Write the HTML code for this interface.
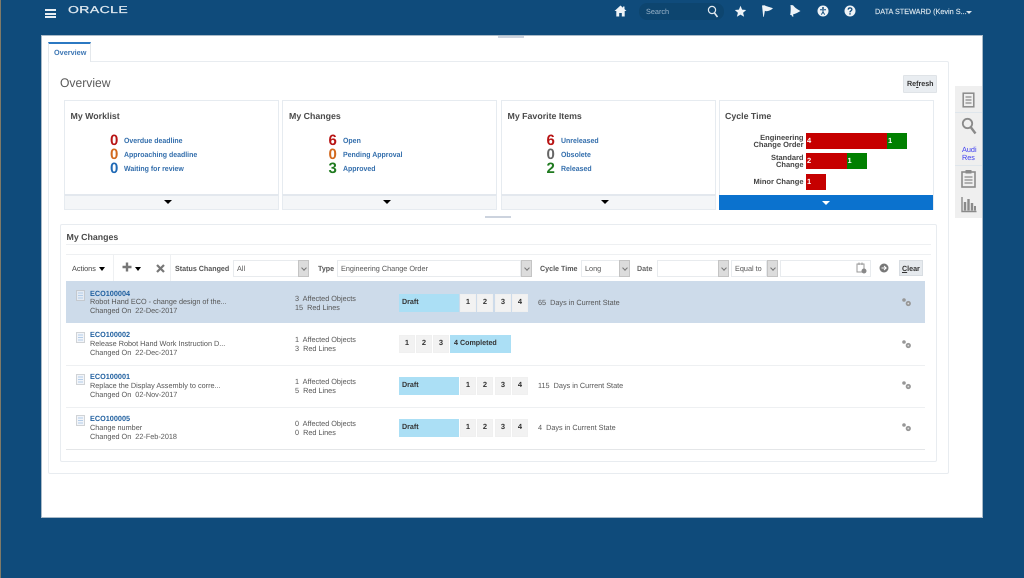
<!DOCTYPE html>
<html><head><meta charset="utf-8"><title>Overview</title>
<style>
html,body{margin:0;padding:0}
body{width:1024px;height:578px;overflow:hidden;position:relative;background:#0f4b7b;font-family:"Liberation Sans",sans-serif;color:#444;text-rendering:geometricPrecision}
div,span,svg{position:absolute}
.t{white-space:nowrap;font-size:7.5px;line-height:10px;transform:scaleX(.97);transform-origin:left}
.t.b{transform:scaleX(.95)}
.b{font-weight:bold}
.lnk{color:#336eac;font-weight:bold;font-size:7.5px;line-height:10px;white-space:nowrap;transform:scaleX(.93);transform-origin:left}
.num{font-weight:bold;font-size:15px;line-height:15px;white-space:nowrap}
.card{background:#fff;border:1px solid #e6ebf0;box-sizing:border-box;top:100px;height:110px}
.foot{background:#f4f6f8;border:1px solid #e6ebf0;border-top:2px solid #e3e8ee;box-sizing:border-box;top:194px;height:16px}
.h{font-weight:bold;font-size:8.8px;line-height:11px;color:#4a4a4a;white-space:nowrap}
.arr{width:0;height:0;border-left:4px solid transparent;border-right:4px solid transparent;border-top:4px solid #000}
.inp{background:#fff;border:1px solid #e8ebee;box-sizing:border-box;height:17px;top:260px}
.dd{background:#dcdcdc;border:1px solid #c4c4c4;box-sizing:border-box;height:17px;top:260px;width:11px}
.dd:after{content:"";position:absolute;left:2.5px;top:5px;width:3px;height:3px;border-right:1px solid #777;border-bottom:1px solid #777;transform:rotate(45deg)}
.bl{background:#abdff5;height:18px}
.st{background:#f2f2f2;border:1px solid #f0f0f0;box-sizing:border-box;height:18px;width:16px;font-weight:bold;font-size:7.5px;line-height:14px;text-align:center;color:#333}
.lk2{color:#1f5f9f;font-weight:bold;font-size:7.5px;line-height:10px;white-space:nowrap;transform:scaleX(.97);transform-origin:left}
.ln{background:#eef0f2;height:1px;left:66px;width:859px}
.bar{font-weight:bold;color:#fff;font-size:7.5px;line-height:16px;padding-left:1px;box-sizing:border-box;height:16px}
.lab{font-weight:bold;font-size:7.5px;line-height:7px;text-align:right;color:#444;white-space:nowrap;right:0}
.side{background:#efefef;left:955px;width:27px;height:26px}
.doc{left:76px;width:9px;height:11px}
</style></head><body>
<div style="left:0;top:0;width:1px;height:578px;background:#7f7a68"></div>

<!-- header -->
<div style="left:45px;top:9px;width:11px;height:2px;background:#e8eef3"></div>
<div style="left:45px;top:12.5px;width:11px;height:2px;background:#e8eef3"></div>
<div style="left:45px;top:16px;width:11px;height:2px;background:#e8eef3"></div>
<div class="t" style="left:67.5px;top:3.5px;color:#dfe8ef;font-size:10px;line-height:14px;letter-spacing:.3px;-webkit-text-stroke:.25px #dfe8ef;transform:scaleX(1.4);transform-origin:left">ORACLE</div>

<svg style="left:614px;top:5px" width="13" height="12" viewBox="0 0 13 12"><path fill="#eef3f7" d="M6.5 0.5L0.5 6H2.3V11.5H5.2V8H7.8V11.5H10.7V6H12.5L10.5 4.1V1.5H9V2.8Z"/></svg>
<div style="left:639px;top:3px;width:85px;height:17px;background:#0d456f;border-radius:8px"></div>
<div class="t" style="left:646px;top:6.5px;color:#9db6cb;font-size:7.5px">Search</div>
<svg style="left:707px;top:5px" width="12" height="13" viewBox="0 0 12 13"><circle cx="5" cy="5" r="3.6" fill="none" stroke="#e3ebf1" stroke-width="1.2"/><path d="M7.5 8L10.5 12" stroke="#e3ebf1" stroke-width="1.6"/></svg>
<svg style="left:734px;top:5px" width="13" height="13" viewBox="0 0 13 13"><path fill="#eef3f7" d="M6.5 0.8L8.1 4.6L12.2 5L9.1 7.7L10.1 11.8L6.5 9.6L2.9 11.8L3.9 7.7L0.8 5L4.9 4.6Z"/></svg>
<svg style="left:761px;top:4px" width="14" height="14" viewBox="0 0 14 14"><path fill="#eef3f7" d="M1 1.5L3.5 1.2C6 2.5 8 2.8 12 4.2C10 6 8 7 5 7.2L3.9 6.8L2.8 13L2.2 12.6Z"/></svg>
<svg style="left:789px;top:4px" width="13" height="14" viewBox="0 0 13 14"><path fill="#eef3f7" d="M1.5 1L4 1.2C5.5 3 7.5 5 11.5 7C9 8.5 7 9.5 4 10.5L4.5 12.5L3 12.5L2.5 11L1.2 11C1.8 8 1.8 4 1.5 1Z"/></svg>
<svg style="left:817px;top:5px" width="12" height="12" viewBox="0 0 12 12"><circle cx="6" cy="6" r="5.5" fill="#eef3f7"/><circle cx="6" cy="3" r="1" fill="#0f4b7b"/><path d="M3 4.7L9 4.7M6 4.7V7M6 7L4.3 9.6M6 7L7.7 9.6" stroke="#0f4b7b" stroke-width="1" fill="none"/></svg>
<svg style="left:844px;top:5px" width="12" height="12" viewBox="0 0 12 12"><circle cx="6" cy="6" r="5.5" fill="#eef3f7"/><path d="M4.2 4.6C4.2 2.4 7.9 2.4 7.9 4.4C7.9 5.8 6 5.7 6 7.4" stroke="#0f4b7b" stroke-width="1.3" fill="none"/><rect x="5.3" y="8.2" width="1.4" height="1.4" fill="#0f4b7b"/></svg>
<div class="t" style="left:875px;top:6.5px;color:#dde7ee;font-size:7.5px;-webkit-text-stroke:.15px #dde7ee">DATA STEWARD (Kevin S...</div>
<div class="arr" style="left:966px;top:10.5px;border-top-color:#d9e4ec;border-left-width:3px;border-right-width:3px;border-top-width:3px"></div>

<!-- main panel -->
<div style="left:42px;top:36px;width:940px;height:481px;background:#fff;box-shadow:0 0 0 1px #a9bac8"></div>
<div style="left:498px;top:36px;width:26px;height:2px;background:#ccd3de"></div>

<!-- tab + content frame -->
<div style="left:48px;top:61px;width:901px;height:413px;border:1px solid #e8ecf0;box-sizing:border-box;border-radius:2px"></div>
<div style="left:48px;top:42px;width:43px;height:20px;background:#fff;border:1px solid #e4e8ec;border-bottom:0;border-top:2px solid #2b78c2;box-sizing:border-box"></div>
<div class="t" style="left:54px;top:47.5px;color:#3c76b4;font-size:7.5px;font-weight:bold">Overview</div>
<div class="t" style="left:59.5px;top:76px;font-size:12.5px;line-height:15px;color:#5a5a5a">Overview</div>
<div style="left:903px;top:75px;width:34px;height:18px;background:#e9edf1;border:1px solid #dfe3e7;box-sizing:border-box;border-radius:1px"></div>
<div class="t b" style="left:906.5px;top:79px;color:#333">Re<u>f</u>resh</div>

<!-- cards -->
<div class="card" style="left:64px;width:215px"></div>
<div class="card" style="left:282px;width:215px"></div>
<div class="card" style="left:500.5px;width:215px"></div>
<div class="card" style="left:718.5px;width:215px"></div>
<div class="foot" style="left:64px;width:215px"></div>
<div class="foot" style="left:282px;width:215px"></div>
<div class="foot" style="left:500.5px;width:215px"></div>
<div style="left:719px;top:195px;width:214px;height:15px;background:#0b72ce"></div>
<div class="arr" style="left:164px;top:200px"></div>
<div class="arr" style="left:383px;top:200px"></div>
<div class="arr" style="left:600.5px;top:200px"></div>
<div class="arr" style="left:821.5px;top:201px;border-top-color:#fff"></div>

<div class="h" style="left:70.5px;top:110.5px">My Worklist</div>
<div class="h" style="left:289px;top:110.5px">My Changes</div>
<div class="h" style="left:507.5px;top:110.5px">My Favorite Items</div>
<div class="h" style="left:725px;top:110.5px">Cycle Time</div>

<div class="num" style="left:110px;top:132.5px;color:#b81414">0</div><div class="lnk" style="left:124px;top:135.5px">Overdue deadline</div>
<div class="num" style="left:110px;top:147px;color:#d2691e">0</div><div class="lnk" style="left:124px;top:149.5px">Approaching deadline</div>
<div class="num" style="left:110px;top:161px;color:#1f69b5">0</div><div class="lnk" style="left:124px;top:164px">Waiting for review</div>

<div class="num" style="left:328.5px;top:132.5px;color:#b81414">6</div><div class="lnk" style="left:342.5px;top:135.5px">Open</div>
<div class="num" style="left:328.5px;top:147px;color:#d2691e">0</div><div class="lnk" style="left:342.5px;top:149.5px">Pending Approval</div>
<div class="num" style="left:328.5px;top:161px;color:#1f7a1f">3</div><div class="lnk" style="left:342.5px;top:164px">Approved</div>

<div class="num" style="left:546.5px;top:132.5px;color:#b81414">6</div><div class="lnk" style="left:561px;top:135.5px">Unreleased</div>
<div class="num" style="left:546.5px;top:147px;color:#666">0</div><div class="lnk" style="left:561px;top:149.5px">Obsolete</div>
<div class="num" style="left:546.5px;top:161px;color:#1f7a1f">2</div><div class="lnk" style="left:561px;top:164px">Released</div>

<!-- chart -->
<div class="lab" style="right:220.5px;top:134px">Engineering<br>Change Order</div>
<div class="lab" style="right:220.5px;top:154px">Standard<br>Change</div>
<div class="lab" style="right:220.5px;top:178px">Minor Change</div>
<div class="bar" style="left:806px;top:133px;width:81px;background:#c60000">4</div>
<div class="bar" style="left:887px;top:133px;width:20px;background:#008000">1</div>
<div class="bar" style="left:806px;top:153px;width:40.5px;background:#c60000">2</div>
<div class="bar" style="left:846.5px;top:153px;width:20px;background:#008000">1</div>
<div class="bar" style="left:806px;top:174px;width:20px;background:#c60000">1</div>

<div style="left:485px;top:216px;width:26px;height:2px;background:#ccd3de"></div>

<!-- My Changes -->
<div style="left:60px;top:224px;width:877px;height:238px;border:1px solid #e8ecf0;box-sizing:border-box;border-radius:2px"></div>
<div class="h" style="left:66.5px;top:232px">My Changes</div>
<div style="left:66px;top:244px;width:865px;height:1px;background:#eef0f2"></div>
<div style="left:66px;top:254px;width:865px;height:1px;background:#eef0f2"></div>
<div style="left:113px;top:255px;width:1px;height:26px;background:#eef0f2"></div>
<div style="left:170px;top:255px;width:1px;height:26px;background:#eef0f2"></div>

<div class="t" style="left:72px;top:263.5px">Actions</div>
<div class="arr" style="left:99px;top:267px;border-left-width:3px;border-right-width:3px"></div>
<svg style="left:122px;top:262px" width="10" height="10" viewBox="0 0 10 10"><path d="M5 0.5V9.5M0.5 5H9.5" stroke="#777" stroke-width="2.4"/></svg>
<div class="arr" style="left:135px;top:267px;border-left-width:3px;border-right-width:3px"></div>
<svg style="left:156px;top:264px" width="9" height="9" viewBox="0 0 9 9"><path d="M1 1L8 8M8 1L1 8" stroke="#777" stroke-width="2.2"/></svg>
<div class="t b" style="left:175px;top:263.5px;color:#555">Status Changed</div>
<div class="inp" style="left:233px;width:66px"></div><div class="dd" style="left:298px"></div>
<div class="t" style="left:236.5px;top:263.5px;color:#555">All</div>
<div class="t b" style="left:317.5px;top:263.5px;color:#555">Type</div>
<div class="inp" style="left:337px;width:184px"></div><div class="dd" style="left:521px"></div>
<div class="t" style="left:341px;top:263.5px;color:#555">Engineering Change Order</div>
<div class="t b" style="left:540px;top:263.5px;color:#555">Cycle Time</div>
<div class="inp" style="left:581px;width:39px"></div><div class="dd" style="left:619px"></div>
<div class="t" style="left:585px;top:263.5px;color:#555">Long</div>
<div class="t b" style="left:637px;top:263.5px;color:#666">Date</div>
<div class="inp" style="left:657px;width:62px"></div><div class="dd" style="left:718px"></div>
<div class="inp" style="left:731px;width:36px"></div><div class="dd" style="left:767px"></div>
<div class="t" style="left:735px;top:263.5px;color:#555">Equal to</div>
<div class="inp" style="left:780px;width:91px"></div>
<svg style="left:856px;top:262px" width="11" height="12" viewBox="0 0 11 12"><rect x="1" y="2" width="7" height="8" fill="none" stroke="#999"/><path d="M3 0.5V3M6 0.5V3" stroke="#999"/><circle cx="8" cy="9" r="2.5" fill="#888"/></svg>
<svg style="left:879px;top:263px" width="10" height="10" viewBox="0 0 10 10"><circle cx="5" cy="5" r="4.5" fill="#777"/><path d="M2.5 5H7M5 3L7.2 5L5 7" stroke="#fff" fill="none"/></svg>
<div style="left:899px;top:260px;width:24px;height:16px;background:#e6eaee;border:1px solid #d8dde2;box-sizing:border-box"></div>
<div class="t b" style="left:901.5px;top:263.5px;color:#333"><u>C</u>lear</div>

<!-- rows -->
<div style="left:66px;top:281px;width:859px;height:42px;background:#cddbea"></div>
<div class="ln" style="top:365px"></div>
<div class="ln" style="top:407px"></div>
<div style="left:66px;top:449px;width:859px;height:1px;background:#e4e6e8"></div>

<!-- row icons -->
<svg class="doc" style="top:290px" viewBox="0 0 9 11"><rect x=".5" y=".5" width="8" height="10" fill="#e4ebf4" stroke="#c4c9cf"/><path d="M2 3H7M2 5.5H7M2 8H7" stroke="#b4cde8"/></svg>
<svg class="doc" style="top:332px" viewBox="0 0 9 11"><rect x=".5" y=".5" width="8" height="10" fill="#f2f5fa" stroke="#d0d3d6"/><path d="M2 3H7M2 5.5H7M2 8H7" stroke="#b4cde8"/></svg>
<svg class="doc" style="top:374px" viewBox="0 0 9 11"><rect x=".5" y=".5" width="8" height="10" fill="#f2f5fa" stroke="#d0d3d6"/><path d="M2 3H7M2 5.5H7M2 8H7" stroke="#b4cde8"/></svg>
<svg class="doc" style="top:415px" viewBox="0 0 9 11"><rect x=".5" y=".5" width="8" height="10" fill="#f2f5fa" stroke="#d0d3d6"/><path d="M2 3H7M2 5.5H7M2 8H7" stroke="#b4cde8"/></svg>

<!-- row 1 -->
<div class="lk2" style="left:90px;top:288.5px">ECO100004</div>
<div class="t" style="left:90px;top:297px;color:#555">Robot Hand ECO - change design of the...</div>
<div class="t" style="left:90px;top:306px;color:#555">Changed On&nbsp; 22-Dec-2017</div>
<div class="t" style="left:295px;top:293.5px;color:#555">3&nbsp; Affected Objects</div>
<div class="t" style="left:295px;top:302.5px;color:#555">15&nbsp; Red Lines</div>
<div class="bl" style="left:399px;top:294px;width:60px"></div>
<div class="t b" style="left:402px;top:296.5px;color:#333">Draft</div>
<div class="st" style="left:460px;top:294px">1</div><div class="st" style="left:477px;top:294px">2</div><div class="st" style="left:495px;top:294px">3</div><div class="st" style="left:512px;top:294px">4</div>
<div class="t" style="left:537.5px;top:297.5px;color:#555">65&nbsp; Days in Current State</div>

<!-- row 2 -->
<div class="lk2" style="left:90px;top:330px">ECO100002</div>
<div class="t" style="left:90px;top:339px;color:#555">Release Robot Hand Work Instruction D...</div>
<div class="t" style="left:90px;top:348px;color:#555">Changed On&nbsp; 22-Dec-2017</div>
<div class="t" style="left:295px;top:335px;color:#555">1&nbsp; Affected Objects</div>
<div class="t" style="left:295px;top:344px;color:#555">3&nbsp; Red Lines</div>
<div class="st" style="left:399px;top:335px">1</div><div class="st" style="left:416px;top:335px">2</div><div class="st" style="left:433px;top:335px">3</div>
<div class="bl" style="left:450px;top:335px;width:61px"></div>
<div class="t b" style="left:454px;top:338px;color:#333">4 Completed</div>

<!-- row 3 -->
<div class="lk2" style="left:90px;top:372px">ECO100001</div>
<div class="t" style="left:90px;top:380.5px;color:#555">Replace the Display Assembly to corre...</div>
<div class="t" style="left:90px;top:389.5px;color:#555">Changed On&nbsp; 02-Nov-2017</div>
<div class="t" style="left:295px;top:376.5px;color:#555">1&nbsp; Affected Objects</div>
<div class="t" style="left:295px;top:385.5px;color:#555">5&nbsp; Red Lines</div>
<div class="bl" style="left:399px;top:377px;width:60px"></div>
<div class="t b" style="left:402px;top:379.5px;color:#333">Draft</div>
<div class="st" style="left:460px;top:377px">1</div><div class="st" style="left:477px;top:377px">2</div><div class="st" style="left:495px;top:377px">3</div><div class="st" style="left:512px;top:377px">4</div>
<div class="t" style="left:537.5px;top:381px;color:#555">115&nbsp; Days in Current State</div>

<!-- row 4 -->
<div class="lk2" style="left:90px;top:413.5px">ECO100005</div>
<div class="t" style="left:90px;top:422.5px;color:#555">Change number</div>
<div class="t" style="left:90px;top:431.5px;color:#555">Changed On&nbsp; 22-Feb-2018</div>
<div class="t" style="left:295px;top:418.5px;color:#555">0&nbsp; Affected Objects</div>
<div class="t" style="left:295px;top:427.5px;color:#555">0&nbsp; Red Lines</div>
<div class="bl" style="left:399px;top:419px;width:60px"></div>
<div class="t b" style="left:402px;top:421.5px;color:#333">Draft</div>
<div class="st" style="left:460px;top:419px">1</div><div class="st" style="left:477px;top:419px">2</div><div class="st" style="left:495px;top:419px">3</div><div class="st" style="left:512px;top:419px">4</div>
<div class="t" style="left:537.5px;top:423px;color:#555">4&nbsp; Days in Current State</div>

<!-- gear icons -->
<svg style="left:902px;top:298px" width="10" height="9" viewBox="0 0 10 9"><circle cx="2" cy="2" r="1.8" fill="#979797"/><circle cx="6.3" cy="5.5" r="2.6" fill="#979797"/><circle cx="6.3" cy="5.5" r=".9" fill="#ddd"/></svg>
<svg style="left:902px;top:340px" width="10" height="9" viewBox="0 0 10 9"><circle cx="2" cy="2" r="1.8" fill="#979797"/><circle cx="6.3" cy="5.5" r="2.6" fill="#979797"/><circle cx="6.3" cy="5.5" r=".9" fill="#ddd"/></svg>
<svg style="left:902px;top:381px" width="10" height="9" viewBox="0 0 10 9"><circle cx="2" cy="2" r="1.8" fill="#979797"/><circle cx="6.3" cy="5.5" r="2.6" fill="#979797"/><circle cx="6.3" cy="5.5" r=".9" fill="#ddd"/></svg>
<svg style="left:902px;top:423px" width="10" height="9" viewBox="0 0 10 9"><circle cx="2" cy="2" r="1.8" fill="#979797"/><circle cx="6.3" cy="5.5" r="2.6" fill="#979797"/><circle cx="6.3" cy="5.5" r=".9" fill="#ddd"/></svg>

<!-- side rail -->
<div style="left:955px;top:86px;width:27px;height:132px;background:#dfe6ec"></div>
<div class="side" style="top:86px"></div>
<div class="side" style="top:113px"></div>
<div class="side" style="top:139px"></div>
<div class="side" style="top:165.5px"></div>
<div class="side" style="top:192px;height:26px"></div>
<svg style="left:962px;top:92px" width="13" height="16" viewBox="0 0 13 16"><rect x="1.2" y="1.2" width="10.6" height="13.6" fill="none" stroke="#8a8a8a" stroke-width="1.5"/><path d="M3.5 5H9.5M3.5 8H9.5M3.5 11H9.5" stroke="#8a8a8a" stroke-width="1.2"/></svg>
<svg style="left:961px;top:117px" width="16" height="18" viewBox="0 0 16 18"><circle cx="6.5" cy="6.5" r="4.7" fill="none" stroke="#8a8a8a" stroke-width="1.8"/><path d="M10 10.5L14.5 16.5" stroke="#8a8a8a" stroke-width="2.4"/></svg>
<div class="t" style="left:961.5px;top:144.5px;color:#3b3bf0;font-size:7.5px">Audi</div>
<div class="t" style="left:961.5px;top:152.5px;color:#3b3bf0;font-size:7.5px">Res</div>
<svg style="left:961px;top:169px" width="15" height="19" viewBox="0 0 15 19"><rect x="1" y="3" width="13" height="15" fill="none" stroke="#8a8a8a" stroke-width="1.6"/><rect x="4.5" y="1" width="6" height="3.5" fill="#8a8a8a"/><path d="M3.5 8H11.5M3.5 11H11.5M3.5 14H11.5" stroke="#8a8a8a" stroke-width="1.3"/></svg>
<svg style="left:961px;top:196px" width="16" height="17" viewBox="0 0 16 17"><path d="M1 1V15.5H15.5" fill="none" stroke="#8a8a8a" stroke-width="1.4"/><path d="M4 14.5V6M7.5 14.5V3M11 14.5V7" stroke="#8a8a8a" stroke-width="2.4"/><path d="M14 14.5V10" stroke="#8a8a8a" stroke-width="2"/></svg>
</body></html>
